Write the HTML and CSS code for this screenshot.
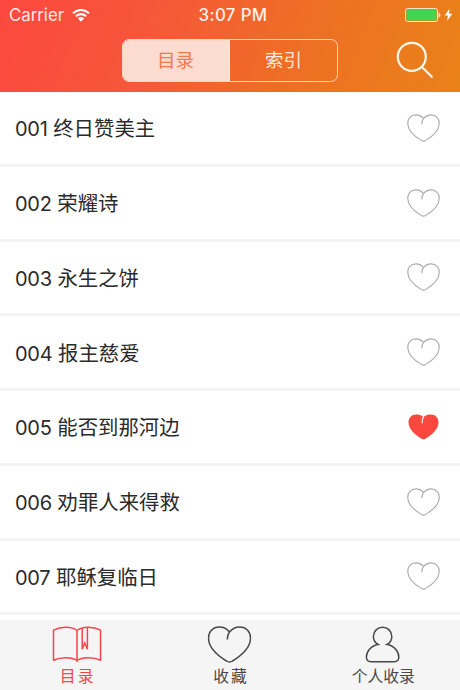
FILE: index.html
```html
<!DOCTYPE html>
<html lang="zh-CN">
  <head>
    <title>目录</title>
    <meta charset="UTF-8">
    <meta name="viewport" content="width=device-width,initial-scale=1.0">
    <link rel="stylesheet" href="styles.css">
  </head>

  <body>
    <svg class="defs" width="0" height="0">
      <symbol id="heart" viewBox="0 0 44 37">
        <path d="M19.8 13.5C19.8 9.5 20.3 8 22 6C25 2.4 28.5 1 32 1C39 1 43 6 43 12C43 21 34 29.5 25 35Q22 37 19 35C10 29.5 1 21 1 12C1 6 5 1 12 1C16 1 19.5 2.8 22 6"/>
      </symbol>
    </svg>

    <div class="app">
      <header class="header">
        <div class="statusbar">
          <div class="carrier">
            <span>Carrier</span>
            <svg width="18" height="13" viewBox="0 0 18 13">
              <path d="M1 4.2Q9 -2.2 17 4.2M3.8 7.3Q9 3 14.2 7.3" fill="none" stroke="#fff" stroke-width="2.1"/>
              <path d="M5.8 9.3Q9 6.9 12.2 9.3L9 12.8z" fill="#fff"/>
            </svg>
          </div>
          <div class="time">3:07 PM</div>
          <div class="power">
            <svg width="48" height="14" viewBox="0 0 48 14">
              <rect x=".5" y=".5" width="32" height="13" rx="2" fill="none" stroke="#fbe3c8"/>
              <rect x="1.5" y="1.5" width="30" height="11" rx="1" fill="#43d551"/>
              <path d="M33.5 4.5Q35.5 5 35.5 7T33.5 9.5z" fill="#fbe3c8"/>
              <path d="M44.8 .5L39.6 7.6H43L42 13L47.4 5.8H43.8z" fill="#fff"/>
            </svg>
          </div>
        </div>
        <div class="navbar">
          <div class="segment">
            <a class="seg active">目录</a>
            <a class="seg">索引</a>
          </div>
          <svg class="search" width="38" height="38" viewBox="0 0 38 38">
            <circle cx="15.8" cy="15.8" r="14" />
            <path d="M25.7 25.7L35.8 35.8"/>
          </svg>
        </div>
      </header>

      <ul class="list">
        <li><span><span class="num">001</span> 终日赞美主</span><svg class="heart"><use href="#heart"/></svg></li>
        <li><span><span class="num">002</span> 荣耀诗</span><svg class="heart"><use href="#heart"/></svg></li>
        <li><span><span class="num">003</span> 永生之饼</span><svg class="heart"><use href="#heart"/></svg></li>
        <li><span><span class="num">004</span> 报主慈爱</span><svg class="heart"><use href="#heart"/></svg></li>
        <li>
          <span><span class="num">005</span> 能否到那河边</span>
          <svg class="heart liked" viewBox="0 0 44 37">
            <path d="M22 5C25 2.4 28.5 1.8 31.5 1.8C38 1.8 42 6.5 42 12C42 21 33 29 24.5 34Q22 35.5 19.5 34C11 29 2 21 2 12C2 6.5 6 1.8 12.5 1.8C15.5 1.8 19 2.4 22 5z"/>
            <path class="notch" d="M20.2 13.5C20 9.5 20.5 7 22.3 4.4"/>
          </svg>
        </li>
        <li><span><span class="num">006</span> 劝罪人来得救</span><svg class="heart"><use href="#heart"/></svg></li>
        <li><span><span class="num">007</span> 耶稣复临日</span><svg class="heart"><use href="#heart"/></svg></li>
      </ul>

      <nav class="tabbar">
        <a class="tab active">
          <svg width="50" height="37" viewBox="0 0 50 37">
            <path d="M25 4.5C20 .4 9 .2 1.5 4.2V34.2C9 30.6 20 31 25 34.4C30 31 41 30.6 48.5 34.2V4.2C41 .2 30 .4 25 4.5zV36" stroke-linejoin="round"/>
            <path d="M30.2 2V23.2L32.8 17L35.4 23.2V2"/>
          </svg>
          <span class="wide">目录</span>
        </a>
        <a class="tab">
          <svg width="45" height="37" viewBox="0 0 44 37"><use href="#heart"/></svg>
          <span class="wide">收藏</span>
        </a>
        <a class="tab">
          <svg width="36" height="37" viewBox="0 0 36 37">
            <path d="M13.2 18.4C10.2 16.8 8.4 13.7 8.4 10.4A9.2 9.2 0 0 1 26.8 10.4C26.8 13.7 25 16.8 22 18.4C29 19.4 33.8 25.5 33.8 31Q33.8 35.7 29.3 35.7H5.9Q1.4 35.7 1.4 31C1.4 25.5 6.2 19.4 13.2 18.4z"/>
          </svg>
          <span>个人收录</span>
        </a>
      </nav>
    </div>
  </body>
</html>
```

FILE: styles.css
```css
* {
  box-sizing: border-box;
}

body {
  margin: 0;
  background-color: #fff;
  color: #2b2b2b;
  font-family: Inter, "Noto Sans CJK SC", sans-serif;
}

.defs {
  display: none;
}

.app {
  display: flex;
  flex-direction: column;
  height: 690px;
  overflow: hidden;
}

/* header */
.header {
  flex: none;
  height: 92px;
  background: linear-gradient(110deg, #fc483f 0%, #f6563a 30%, #ef6d25 62%, #e98318 100%);
  color: #fff;
}

.statusbar {
  display: grid;
  grid-template-columns: 1fr auto 1fr;
  align-items: center;
  height: 30px;
  padding: 0 7px 0 9px;
  font-size: 16.8px;
}

.carrier {
  display: flex;
  align-items: center;
  gap: 8px;
  color: #ffe9e3;
}

.time {
  padding-left: 4px;
  font-size: 16.8px;
  font-weight: 500;
  letter-spacing: 0.4px;
  color: #fff0e8;
}

.power {
  display: flex;
  justify-content: flex-end;
}

.navbar {
  display: grid;
  grid-template-columns: 1fr 216px 1fr;
  align-items: start;
  padding-top: 9px;
}

.segment {
  grid-column: 2;
  display: flex;
  height: 43px;
  border: 1.5px solid #fcd9c6;
  border-radius: 7px;
  overflow: hidden;
}

.seg {
  width: 50%;
  font-size: 18.5px;
  line-height: 41px;
  text-align: center;
  color: #ffeadd;
}

.seg.active {
  padding-right: 1px;
  border-right: 1px solid #fff3ea;
  background-color: #fcdcd0;
  color: #f2794e;
}

.search {
  justify-self: end;
  margin: 2px 26px 0 0;
  fill: none;
  stroke: #fff5e9;
  stroke-width: 2.2;
  stroke-linecap: round;
}

/* songs */
.list {
  flex: 1;
  min-height: 0;
  margin: 0;
  padding: 0;
  list-style: none;
}

.list li {
  display: flex;
  align-items: center;
  justify-content: space-between;
  height: 74.75px;
  padding: 0 20px 1px 15px;
  border-bottom: 3px solid #f4f4f4;
  font-size: 20.4px;
}

.num {
  font-size: 20px;
  letter-spacing: -0.3px;
}

.heart {
  width: 33px;
  height: 28px;
  margin-top: 1px;
  fill: none;
  stroke: #aaa;
  stroke-width: 1.5;
}

.heart.liked {
  fill: #fb483f;
  stroke: none;
}

.heart .notch {
  fill: none;
  stroke: #fff;
  stroke-width: 1.6;
}

/* bottom tabs */
.tabbar {
  flex: none;
  display: grid;
  grid-template-columns: repeat(3, 1fr);
  height: 70px;
  padding-top: 6px;
  background-color: #f5f5f5;
}

.tab {
  display: flex;
  flex-direction: column;
  align-items: center;
  color: #484848;
  font-size: 15.8px;
  line-height: 28px;
}

.tab svg {
  fill: none;
  stroke: currentColor;
  stroke-width: 1.5;
}

.tab .wide {
  letter-spacing: 2px;
  margin-right: -2px;
}

.tab.active {
  color: #f8434a;
}
```
